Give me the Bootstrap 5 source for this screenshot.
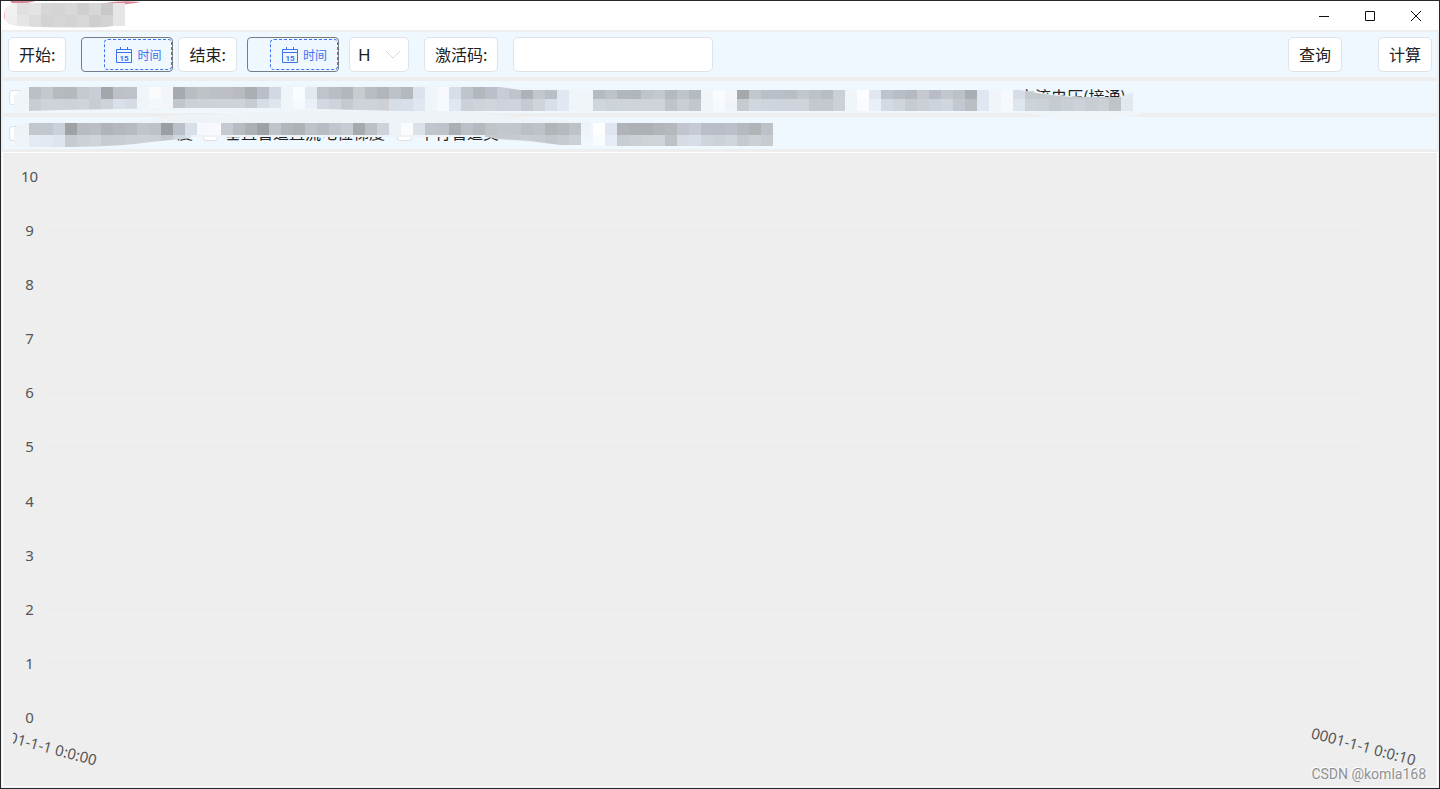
<!DOCTYPE html>
<html lang="zh-CN">
<head>
<meta charset="utf-8">
<meta name="viewport" content="width=device-width, initial-scale=1">
<title>查询</title>
<link href="https://cdn.jsdelivr.net/npm/bootstrap@5.3.0/dist/css/bootstrap.min.css" rel="stylesheet">
<style>
  body { font-family: "Noto Sans", "Noto Sans CJK SC", sans-serif; background: #eee; color: #212121; }
  .window { min-height: 100vh; border: 1px solid #24292c; background: #eee; }
  .titlebar { height: 29px; background: #fff; }
  .titlebar button { width: 46px; height: 29px; color: #111; }
  .toolbar, .checks { background: #eff7ff; }
  .toolbar { height: 45px; margin: 2px 2px 0; padding: 0 5px; font: 16px/24px "Noto Sans CJK SC", sans-serif; }
  .box { height: 35px; border: 1px solid #dfe2e6; border-radius: 5px; background: #fff; color: #212121; padding: 0 10px; line-height: 33px; white-space: nowrap; }
  .group { gap: 15px; }
  .period { gap: 10px; }
  .pair { gap: 5px; }
  .commands { gap: 36px; }
  .picker { width: 92px; height: 35px; border: 1px solid #777c82; border-radius: 4px; padding: 0 0 0 2px; }
  .picker input { width: 20px; border: 0; background: transparent; padding: 0; }
  .picker button { width: 69px; height: 31px; border: 1px dashed #3e73f0; border-radius: 4px; background: transparent; color: #3e73f0; font-size: 12px; line-height: 16px; padding: 0; }
  .unit { width: 60px; }
  .unit select { width: 60px; padding: 0 8px; appearance: none; font-family: "Noto Sans", sans-serif; font-size: 17px; }
  .unit svg { right: 8px; top: 12px; pointer-events: none; }
  .code { width: 200px; }
  .filters { margin: 4px 2px 0; }
  .checks { height: 32px; padding-left: 6px; font: 16px/24px "Noto Sans CJK SC", sans-serif; }
  .checks label { width: 141px; white-space: nowrap; gap: 8px; }
  .checks span { padding-bottom: 2px; }
  .checks.wide { margin-top: 4px; }
  .checks.wide label { width: 194px; gap: 7px; }
  .checks input { appearance: none; width: 15px; height: 15px; flex: none; margin: 0; border: 1px solid #dcdfe3; border-radius: 3px; background: #fff; }
  .wide .tail { width: 162px; text-align: right; }
  .cover { left: 0; top: -4px; pointer-events: none; }
  .chart { margin: 3px 1px 1px; border: 1px solid #fff; padding-top: 12px; color: #555; font-size: 15px; line-height: 22px; }
  .tick { height: 22px; padding-right: 76px; }
  .tick span { width: 53px; text-align: center; }
  .tick i { height: 1px; margin-left: -9px; background: #ebebeb; }
  .xaxis { height: 58px; padding: 0 20px 0 10px; white-space: nowrap; }
  .xaxis span { display: block; height: 22px; margin-top: 7px; transform: rotate(15deg); }
  .from { overflow: hidden; padding-right: 10px; }
  .from span { margin-left: -22px; }
  .watermark { right: 13px; bottom: 4px; font: 14px/20px Roboto, sans-serif; color: #919191; text-shadow: -1px -1px 0 #fff; }
</style>
</head>
<body>
<div class="window d-flex flex-column position-relative">
  <header class="titlebar d-flex justify-content-between">
    <svg id="title" width="150" height="29" viewBox="1 1 150 29" aria-hidden="true">
      <path d="M10 1H36Q26 4 12 3ZM105 3Q122 0 141 2Q128 5 105 5Z" fill="#dc8796"/>
      <path d="M7 8Q4 13 5 19" fill="none" stroke="#f3c3ca" stroke-width="2"/>
      <clipPath id="titleClip"><path d="M16 3H125V26H112Q100 29 60 28L16 26Q4 24 4 14Q5 5 16 3Z"/></clipPath>
      <g clip-path="url(#titleClip)"></g>
    </svg>
    <div class="d-flex">
      <button class="btn p-0 border-0 rounded-0" aria-label="最小化"><svg class="d-block mx-auto" width="12" height="12"><path d="M1 6.500H11" stroke="currentColor"/></svg></button>
      <button class="btn p-0 border-0 rounded-0" aria-label="最大化"><svg class="d-block mx-auto" width="12" height="12"><path d="M1.500 1.500H10.500V10.500H1.500Z" fill="none" stroke="currentColor"/></svg></button>
      <button class="btn p-0 border-0 rounded-0" aria-label="关闭"><svg class="d-block mx-auto" width="12" height="12"><path d="M1 1L11 11M11 1L1 11" stroke="currentColor"/></svg></button>
    </div>
  </header>

  <div class="toolbar d-flex align-items-center justify-content-between">
    <div class="group d-flex align-items-center">
      <label class="box" for="start">开始:</label>
      <div class="period d-flex align-items-center">
        <div class="pair d-flex align-items-center">
          <div class="picker d-flex align-items-center">
            <input id="start" type="text">
            <button type="button" class="d-flex align-items-center justify-content-center gap-1"><svg width="18" height="18" fill="none" stroke="currentColor"><path d="M1.500 3.500H16.500V16.500H1.500ZM1.500 6.500H16.500M5.500 1V4M12.500 1V4"/><text x="9" y="15" text-anchor="middle" font-family="Roboto, sans-serif" font-size="8" font-weight="bold" fill="currentColor" stroke="none">15</text></svg><span>时间</span></button>
          </div>
          <label class="box" for="end">结束:</label>
        </div>
        <div class="picker d-flex align-items-center">
          <input id="end" type="text">
          <button type="button" class="d-flex align-items-center justify-content-center gap-1"><svg width="18" height="18" fill="none" stroke="currentColor"><path d="M1.500 3.500H16.500V16.500H1.500ZM1.500 6.500H16.500M5.500 1V4M12.500 1V4"/><text x="9" y="15" text-anchor="middle" font-family="Roboto, sans-serif" font-size="8" font-weight="bold" fill="currentColor" stroke="none">15</text></svg><span>时间</span></button>
        </div>
        <div class="unit position-relative">
          <select class="box" aria-label="单位"><option>H</option></select>
          <svg class="position-absolute" width="16" height="12" fill="none" stroke="#d5d8dc"><path d="M1 2L8 9L15 2"/></svg>
        </div>
      </div>
      <label class="box" for="code">激活码:</label>
      <input id="code" class="box code" type="text">
    </div>
    <div class="commands d-flex">
      <button type="button" class="box">查询</button>
      <button type="button" class="box">计算</button>
    </div>
  </div>

  <div class="filters position-relative">
    <div class="checks d-flex align-items-center">
      <label class="d-flex align-items-center"><input type="checkbox" aria-label="1"></label>
      <label class="d-flex align-items-center"><input type="checkbox" aria-label="2"></label>
      <label class="d-flex align-items-center"><input type="checkbox" aria-label="3"></label>
      <label class="d-flex align-items-center"><input type="checkbox" aria-label="4"></label>
      <label class="d-flex align-items-center"><input type="checkbox" aria-label="5"></label>
      <label class="d-flex align-items-center"><input type="checkbox" aria-label="6"></label>
      <label class="d-flex align-items-center"><input type="checkbox" aria-label="7"></label>
      <label class="d-flex align-items-center"><input type="checkbox"><span>交流电压(接通)</span></label>
    </div>
    <div class="checks wide d-flex align-items-center">
      <label class="d-flex align-items-center"><input type="checkbox"><span class="tail">度</span></label>
      <label class="d-flex align-items-center"><input type="checkbox"><span>垂直管道直流电位梯度</span></label>
      <label class="d-flex align-items-center"><input type="checkbox"><span>平行管道交</span></label>
      <label class="d-flex align-items-center"><input type="checkbox" aria-label="4"></label>
    </div>
    <svg class="cover position-absolute" width="1150" height="76" viewBox="3 77 1150 76" aria-hidden="true">
      <path d="M14 111V96Q18 88 40 85H440L560 89L600 90H1010L1026 91Q1080 99 1120 97L1133 93V111H1146Q1138 117 1110 119Q1060 124 1020 111Z" fill="#f0f5fa"/>
      <path d="M130 123Q160 115 200 114L300 111H480L500 116L590 122V137H14V128Q20 123 40 122Z" fill="#eef3f8"/>
      <path d="M14 134H190V138L160 141Q110 149 29 147H14ZM480 134H582V145L540 143L500 140Z" fill="#eef4fa"/>
      <path d="M590 122H775V146H590Z" fill="#eff6fd"/>
      <clipPath id="coverClip"><path d="M0 87H500L520 90H1020Q1060 98 1090 97H1120L1133 92V111H400L280 108H180L60 110L29 111H0ZM0 123H780V146H593V145H560L530 141L500 139L485 137V135H191V138L150 142Q110 148 29 147H0Z"/></clipPath>
      <g id="mosaic" clip-path="url(#coverClip)"></g>
    </svg>
  </div>

  <main class="chart d-flex flex-column flex-grow-1">
    <div id="ticks" class="d-flex flex-column justify-content-between flex-grow-1"></div>
    <div class="xaxis d-flex justify-content-between"><div class="from"><span>0001-1-1 0:0:00</span></div><div><span>0001-1-1 0:0:10</span></div></div>
  </main>
  <div class="watermark position-absolute">CSDN @komla168</div>
</div>

<script src="https://cdn.jsdelivr.net/npm/bootstrap@5.3.0/dist/js/bootstrap.bundle.min.js"></script>
<script>
  // Horizontal value ticks, highest first
  document.getElementById('ticks').innerHTML = Array.from({ length: 11 }, (_, n) =>
    `<div class="tick d-flex align-items-center"><span>${10 - n}</span>${n > 0 && n < 10 ? '<i class="flex-grow-1"></i>' : ''}</div>`).join('');

  // Each strip is a run of 12px cells; "-" leaves a cell open
  const strip = (x, y, cells) => cells.trim().split(/\s+/).map((c, i) =>
    c === '-' ? '' : `<rect x="${x + i * 12}" y="${y}" width="12" height="12" fill="#${c}"/>`).join('');
  document.getElementById('mosaic').innerHTML =
    strip(29, 87, `bcc0c6 c3c8ce b6babf b4b9be c4c9d0 c9ced6 a3a7ab bdc0c7 bec3ca - f9fbfd f2f6fb
      a5aab0 b8bdc2 bec3c8 bbc0c6 bcc0c6 b8bcc2 aaafb3 babec6 d2d9e2 - fafdff e3e9f1
      bfc4cc b9bdc4 b2b6be c8ccd1 b8bdc3 b2b6bc bdc2c9 b4b9bf dde3ec - f7f9fd d8dee8
      bfc5cd b3b8bf bbbfc9 c8ccd4 bfc4cc aeb1b8 c2c6cd b9bfc7 e1e7f1 - -
      b6bac3 bdc2c8 b2b7bd b1b5bd c0c4cb c4c8cf b5bac1 bfc4cb b5bac1 - f9fbfd f3f6fb
      a4a8ab c3c8ce bbc0c8 bbc0c8 b9bec5 c2c6cd bdc2ca b8bdc4 cad0d7 - fcfdff e1e7ef
      bfc4cc b9bec6 b5b9c2 c6cad0 b8bdc5 c2c7ce bcc1c6 a9aeb2 dfe6ef - f6f9fd d7dde6
      c5cad1 c5cad1 c5cad1 c5cad1 c5cad1 c9ced6 c5cad1 bfc4c9 e3eaf2`) +
    strip(29, 99, `c9cdd3 cdd3d8 cdd3d9 cdd2d9 cfd4db c7cbd2 ced3d8 dae0e9 d6dce4 - f4f8fc f2f6fb
      c1c6cc cbd0d6 cdd2d8 cdd2d8 ced3d9 ced3d9 c7ccd3 d7dde4 dfe5ed - f6faff eaf0f7
      d2d8df cfd4dc c6cad0 cdd3d8 cdd3d8 cdd1d5 d7dde6 d8dfe8 e1e7f0 - f6f9fd e1e7f1
      ccd1d9 cfd4dc d0d5dc ced3db cfd4dc c6cad2 cfd4db d9dfe8 e2e8f2 - -
      d0d6de cdd3da ced4da ced4da cfd4da cfd4da bfc3ca c9ced5 c2c7cd - f6f9fd f0f4fa
      c6cbd0 d1d7de cfd5dc ced4db cfd4dc cfd4db c4c9d0 c3c8d0 ccd1d9 - f9fbff e9eff7
      d4dae2 cfd5dd c6cbd2 cad0d5 cdd3da d0d6dd c3c7cf b9bec2 e0e7f0 - f5f8fc dfe5ed
      cdd3da cbd1d8 c6cbd2 c9cfd6 ccd2d8 c8cdd4 cbd0d7 bfc4c9 e1e8f0`) +
    strip(29, 123, `c3c8ce c3c8d0 cbd1d8 9fa2a5 b8bcc2 babec5 b0b4ba b4b8be b6bbc2 c0c4cb bdc1c8
      9b9fa3 bbbfc8 d9dfe7 f6f8fd f7f9fd c5cad2 b7bcc3 adb0b5 9ea2a6 bfc4ca b2b6bc
      aeb2b6 bec3ca b7bcc4 c1c6cd c6cbd4 a5aaae bbc0c7 cdd3da - f9fbfd dae1e8 c0c5cd
      bec3cb aaafb3 bbc0c8 b4b9bf bfc4c8 c2c7ce c1c6cd babfc5 bdc2c8 b0b5ba b5babe bdc2c9
      - fdffff dfe6ef b0b4b9 adb1b6 adb1b6 b2b6ba b5b9be c1c5cf c5cad3 babfc7 b9bec6
      bcc1c9 b5b9c1 afb4b7 bdc2c9`) +
    strip(29, 135, `e4ebf2 e2e9f1 dee5ed c6cbd1 ccd1d7 cfd4db c7cbd2 c8cdd3 cbd0d7 ccd1d7 cad0d6
      c3c8ce d0d6dd dce2ea f7f9fd f8faff - - - - - - - - - - - - - - - f9fbfd - - - - - -
      c5cad1 c5cad1 c5cad1 c8cdd4 c6cbd1 c2c7ce c6cbd2 cbd0d6
      - f9fcff e5ecf5 c8cdd1 cbd0d6 ced3d8 ced3d9 bdc2c7 d6dbe4 d8dee7 cfd5dc ccd2d8
      d0d6dd c5cad1 cad0d6 c6cbcf`);
  document.querySelector('#title g').innerHTML =
    strip(5, 3, 'f1f1f1 e0e0e0 e3e3e3 d6d6d6 d4d4d4 d8d8d8 cfcfcf d7d7d7 c9c9c9 e6e6e6') +
    strip(5, 15, 'efefef e5e5e5 dcdcdc d3d3d3 d6d6d6 d3d3d3 d8d8d8 cfcfcf d3d3d3 e6e6e6') +
    strip(5, 27, 'e8eef2 e8eef2 e8eef2 e8eef2 e8eef2 e8eef2 e8eef2 e8eef2 e8eef2 ffffff');
</script>
</body>
</html>
